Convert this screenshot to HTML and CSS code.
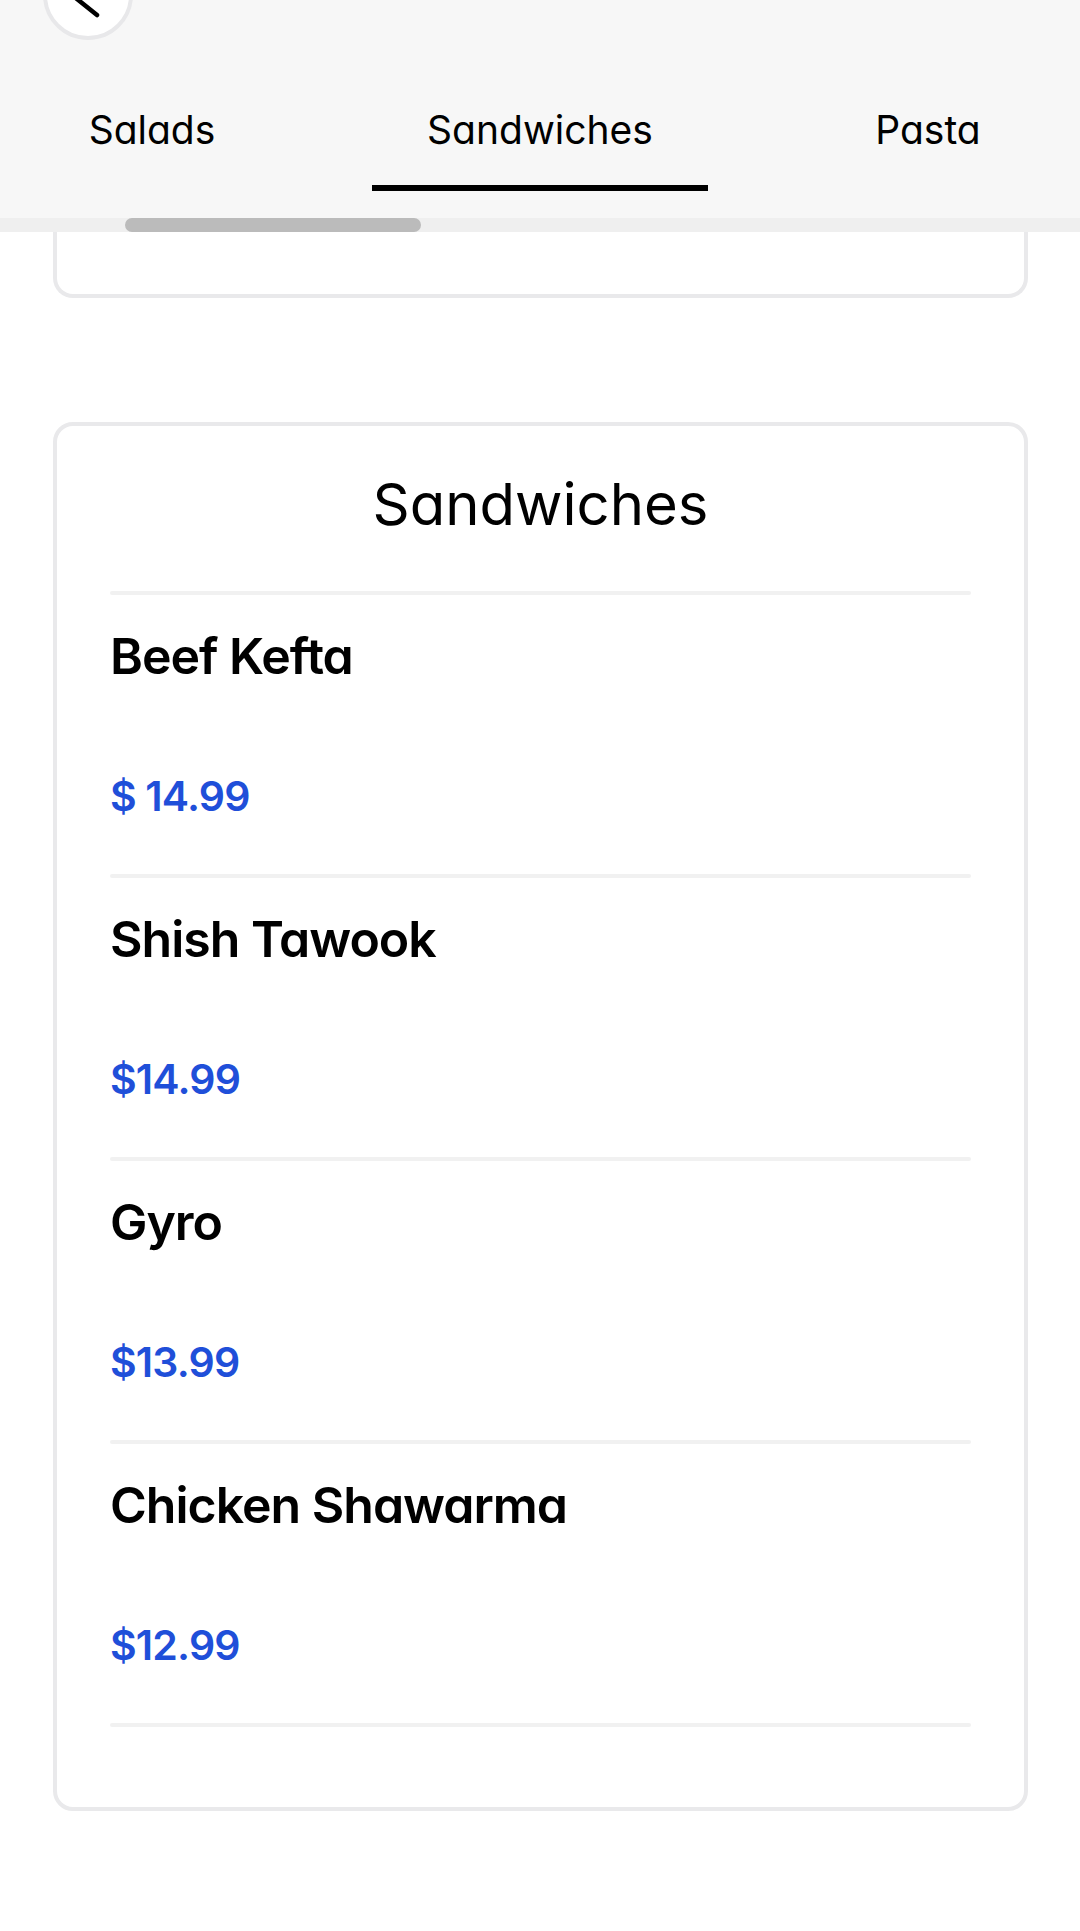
FILE: index.html
```html
<!DOCTYPE html>
<html lang="en">
<head>
    <meta charset="UTF-8">
    <meta name="viewport" content="width=device-width, initial-scale=1.0">
    <title>Menu - Sandwiches</title>
    <link rel="stylesheet" href="styles.css">
</head>
<body>
    <div class="header">
        <button class="back-button" aria-label="Back">
            <svg width="82" height="82" viewBox="0 0 82 82">
                <polyline points="50,21 25,41 50,61" fill="none" stroke="#000" stroke-width="4.5" stroke-linecap="round" stroke-linejoin="round"/>
            </svg>
        </button>
        <div class="tabs">
            <div class="tab">Salads</div>
            <div class="tab active">Sandwiches</div>
            <div class="tab">Pasta</div>
        </div>
    </div>
    <div class="scroll-track">
        <div class="scroll-thumb"></div>
    </div>

    <div class="content">
        <!-- bottom of the Salads card, scrolled under the header -->
        <div class="card card-tail"></div>

        <div class="card">
            <h2 class="card-title">Sandwiches</h2>
            <div class="item-list">
                <div class="item">
                    <div class="item-name">Beef Kefta</div>
                    <div class="item-price">$ 14.99</div>
                </div>
                <div class="item">
                    <div class="item-name">Shish Tawook</div>
                    <div class="item-price">$14.99</div>
                </div>
                <div class="item">
                    <div class="item-name">Gyro</div>
                    <div class="item-price">$13.99</div>
                </div>
                <div class="item">
                    <div class="item-name">Chicken Shawarma</div>
                    <div class="item-price">$12.99</div>
                </div>
            </div>
        </div>
    </div>
</body>
</html>
```

FILE: styles.css
```css
body {
    margin: 0;
    background-color: #fff;
    font-family: 'Inter', 'Roboto', sans-serif;
    font-feature-settings: "cv11" 1;
    color: #000;
}

/* header with category tabs */
.header {
    position: relative;
    overflow: hidden;
    padding: 106px 0 27px;
    background-color: #f7f7f7;
}

.back-button {
    position: absolute;
    top: -50px;
    left: 43px;
    width: 90px;
    height: 90px;
    box-sizing: border-box;
    padding: 0;
    border: 4px solid #e8e8ea;
    border-radius: 50%;
    background-color: #fff;
}

.back-button svg {
    display: block;
}

.tabs {
    display: flex;
    gap: 52px;
    margin-left: -16px;
    white-space: nowrap;
}

.tab {
    flex: 0 0 336px;
    padding-bottom: 31px;
    border-bottom: 6px solid transparent;
    text-align: center;
    font-size: 39px;
    line-height: 48px;
    font-weight: 400;
}

.tab.active {
    border-bottom-color: #000;
}

.scroll-track {
    height: 14px;
    background-color: #efefef;
}

.scroll-thumb {
    width: 296px;
    height: 14px;
    margin-left: 125px;
    border-radius: 7px;
    background-color: #bbb;
}

/* cards */
.card {
    margin: 0 52px 0 53px;
    padding: 43px 53px 80px;
    border: 4px solid #e9e9eb;
    border-radius: 20px;
}

.card-tail {
    height: 62px;
    padding: 0;
    border-top: none;
    border-radius: 0 0 20px 20px;
    margin-bottom: 124px;
}

.card-title {
    margin: 0 0 52px;
    text-align: center;
    font-size: 58px;
    line-height: 70px;
    font-weight: 400;
}

.item-list::after,
.item::before {
    content: "";
    display: block;
    height: 4px;
    border-radius: 2px;
    background-color: #f1f1f1;
}

.item {
    padding-bottom: 53px;
}

.item::before {
    margin-bottom: 31px;
}

.item-name {
    font-size: 50px;
    line-height: 60px;
    font-weight: 600;
    letter-spacing: -0.02em;
}

.item-price {
    margin-top: 85px;
    font-size: 41px;
    line-height: 50px;
    font-weight: 600;
    letter-spacing: -0.02em;
    color: #1f4fd9;
}
```
